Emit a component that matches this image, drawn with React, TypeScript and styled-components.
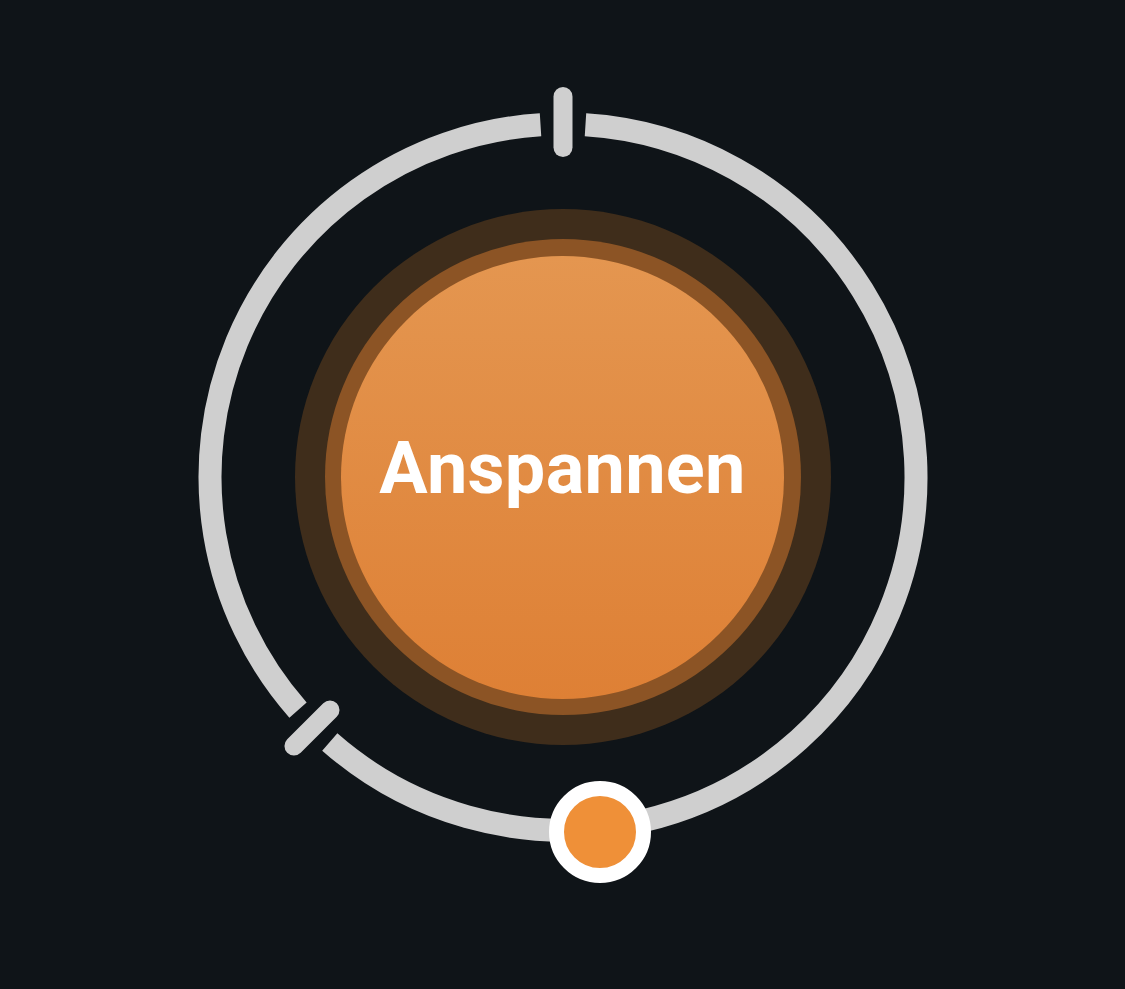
import styled, { createGlobalStyle } from "styled-components";

const GlobalStyle = createGlobalStyle`
  html, body {
    margin: 0;
    padding: 0;
    background: #0f1418;
  }
  * {
    box-sizing: border-box;
  }
`;

const SIZE = 800;
const C = SIZE / 2;
const R = 353;
const STROKE = 23;
const GAP = 3.65; // degrees either side of a tick
const TICKS = [-90, 135];
const KNOB_ANGLE = 84;
const KNOB_R = 357;

const Page = styled.main`
  width: 100vw;
  height: 100vh;
  display: flex;
  flex-direction: column;
  align-items: center;
  padding-top: 77px;
  background: #0f1418;
  font-family: Roboto, "Liberation Sans", sans-serif;
  overflow: hidden;
`;

const Dial = styled.div`
  position: relative;
  width: ${SIZE}px;
  height: ${SIZE}px;
  display: grid;
  place-items: center;
  & > * {
    grid-area: 1 / 1;
  }
`;

const Track = styled.svg`
  width: ${SIZE}px;
  height: ${SIZE}px;
  display: block;
`;

const Halo = styled.div`
  width: 536px;
  height: 536px;
  border-radius: 50%;
  background: #3f2d1b;
  display: grid;
  place-items: center;
`;

const Rim = styled.div`
  width: 476px;
  height: 476px;
  border-radius: 50%;
  background: #8c5425;
  display: grid;
  place-items: center;
`;

const Face = styled.button`
  width: 443px;
  height: 443px;
  border: none;
  border-radius: 50%;
  background: linear-gradient(180deg, #e49650 0%, #de8035 100%);
  color: #ffffff;
  font-family: Roboto, "Liberation Sans", sans-serif;
  font-weight: 700;
  font-size: 72px;
  line-height: 1;
  letter-spacing: 0.3px;
  padding: 0 0 16px 0;
  cursor: pointer;
`;

const Knob = styled.div`
  position: absolute;
  width: 102px;
  height: 102px;
  margin: -51px 0 0 -51px;
  border-radius: 50%;
  border: 15px solid #ffffff;
  background: #ef9038;
`;

function polar(angle: number, r: number) {
  const a = (angle * Math.PI) / 180;
  return { x: C + r * Math.cos(a), y: C + r * Math.sin(a) };
}

function arc(from: number, to: number) {
  const s = polar(from, R);
  const e = polar(to, R);
  const large = to - from > 180 ? 1 : 0;
  return `M ${s.x} ${s.y} A ${R} ${R} 0 ${large} 1 ${e.x} ${e.y}`;
}

export default function App() {
  const segments = [
    [TICKS[0] + GAP, TICKS[1] - GAP],
    [TICKS[1] + GAP, TICKS[0] + 360 - GAP],
  ];
  const knob = polar(KNOB_ANGLE, KNOB_R);

  return (
    <Page>
      <GlobalStyle />
      <Dial>
        <Track viewBox={`0 0 ${SIZE} ${SIZE}`}>
          {segments.map(([a, b]) => (
            <path
              key={a}
              d={arc(a, b)}
              fill="none"
              stroke="#cfcfcf"
              strokeWidth={STROKE}
            />
          ))}
          {TICKS.map((t) => {
            const p1 = polar(t, 329.5);
            const p2 = polar(t, 380.5);
            return (
              <line
                key={t}
                x1={p1.x}
                y1={p1.y}
                x2={p2.x}
                y2={p2.y}
                stroke="#cfcfcf"
                strokeWidth={19}
                strokeLinecap="round"
              />
            );
          })}
        </Track>
        <Halo>
          <Rim>
            <Face>Anspannen</Face>
          </Rim>
        </Halo>
        <Knob style={{ left: knob.x, top: knob.y }} />
      </Dial>
    </Page>
  );
}
